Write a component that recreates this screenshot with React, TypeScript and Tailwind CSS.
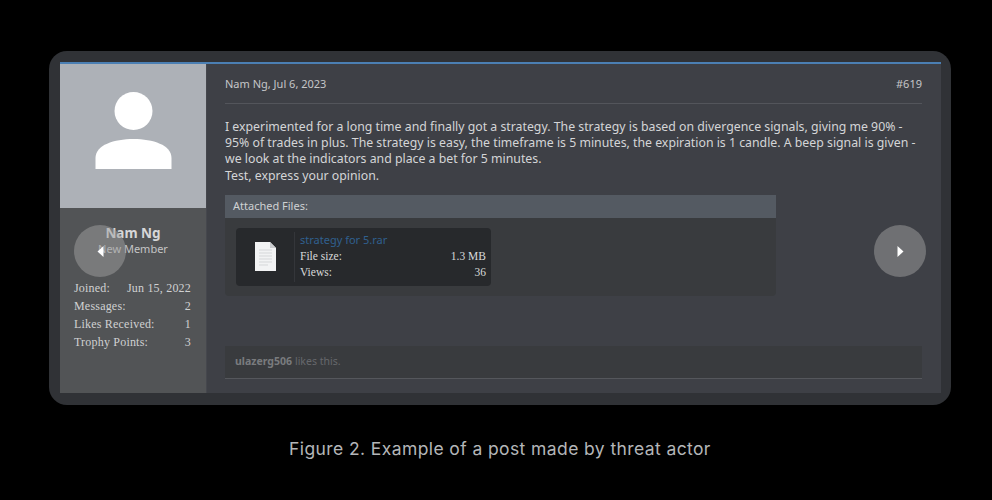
import { ReactNode } from 'react';

function Arrow({ left }: { left?: boolean }) {
    return (
        <svg width="7" height="11" viewBox="0 0 7 11" fill="#ffffff" className={left ? 'rotate-180' : ''}>
            <path d="M0.5 0 L6.5 5.5 L0.5 11 Z" />
        </svg>
    );
}

function Stat({ label, children }: { label: string; children: ReactNode }) {
    return (
        <div className="flex h-[18px] items-center justify-between">
            <span>{label}</span>
            <span>{children}</span>
        </div>
    );
}

export default function App() {
    return (
        <div className="relative h-[500px] w-[992px] overflow-hidden bg-black font-['Noto_Sans',sans-serif]">
            <div className="ml-[49px] flex w-[902px] flex-col items-center pt-[51px]">
                <div className="h-[354px] w-[902px] rounded-[18px] bg-[#303236] pb-[12px] pl-[11px] pr-[10px] pt-[11px]">
                    <div className="flex h-[331px] border-t-2 border-[#4b7fb3] bg-[#3e4046]">
                        <aside className="flex w-[146px] flex-col bg-[#525456]">
                            <div className="flex h-[144px] items-center justify-center bg-[#adb1b7] pb-[12px]">
                                <svg width="77" height="77" viewBox="0 0 77 77" fill="#ffffff">
                                    <circle cx="38.5" cy="19" r="19" />
                                    <path d="M0.5 77 V66 C0.5 53 19 47 38.5 47 C58 47 76.5 53 76.5 66 V77 Z" />
                                </svg>
                            </div>
                            <div className="pt-[16px] text-center">
                                <div className="text-[13.5px] font-bold leading-[18px] text-[#d6d7d8]">Nam Ng</div>
                                <div className="text-[11px] leading-[13px] text-[#c4c5c6]">New Member</div>
                            </div>
                            <div className="mt-[24px] pl-[14px] pr-[15px] font-['Liberation_Serif',serif] text-[12px] tracking-[0.2px] text-[#d0d1d2]">
                                <Stat label="Joined:">Jun 15, 2022</Stat>
                                <Stat label="Messages:">2</Stat>
                                <Stat label="Likes Received:">1</Stat>
                                <Stat label="Trophy Points:">3</Stat>
                            </div>
                        </aside>
                        <main className="flex flex-1 flex-col border-l border-[#45474d] pl-[18px] pr-[19px]">
                            <div className="flex h-[40px] items-center justify-between border-b border-[#53555b] pt-[1px] text-[11px] text-[#c5c6c8]">
                                <span>Nam Ng, Jul 6, 2023</span>
                                <span>#619</span>
                            </div>
                            <p className="mt-[15px] text-[12.3px] leading-[16.2px] text-[#d4d5d7]">
                                I experimented for a long time and finally got a strategy. The strategy is based on divergence signals, giving me 90% -
                                <br />
                                95% of trades in plus. The strategy is easy, the timeframe is 5 minutes, the expiration is 1 candle. A beep signal is given -
                                <br />
                                we look at the indicators and place a bet for 5 minutes.
                                <br />
                                Test, express your opinion.
                            </p>
                            <div className="mt-[11px] w-[551px] rounded-b-[4px] bg-[#393b3e]">
                                <div className="flex h-[23px] items-center bg-[#545a62] px-[8px] text-[11px] text-[#cfd1d3]">Attached Files:</div>
                                <div className="px-[11px] pb-[10px] pt-[10px]">
                                    <div className="flex h-[58px] w-[255px] rounded-[4px] bg-[#27292c] py-[4px]">
                                        <div className="flex w-[59px] items-center justify-center border-r border-[#34363a]">
                                            <svg width="21" height="29" viewBox="0 0 21 29">
                                                <path d="M0 0 H15 L21 6 V29 H0 Z" fill="#f2f3f4" />
                                                <path d="M15 0 L21 6 H15 Z" fill="#c9cbce" />
                                                <path d="M4 8 H17 M4 11 H17 M4 14 H17 M4 17 H17 M4 20 H17 M4 23 H13" stroke="#d5d7d9" strokeWidth="1" />
                                            </svg>
                                        </div>
                                        <div className="flex flex-1 flex-col pl-[5px] pr-[5px] font-['Liberation_Serif',serif] text-[11.5px] leading-[16px] text-[#d8d9da]">
                                            <span className="font-['Noto_Sans',sans-serif] text-[11px] leading-[16px] text-[#30608f]">strategy for 5.rar</span>
                                            <div className="flex justify-between">
                                                <span>File size:</span>
                                                <span>1.3 MB</span>
                                            </div>
                                            <div className="flex justify-between">
                                                <span>Views:</span>
                                                <span>36</span>
                                            </div>
                                        </div>
                                    </div>
                                </div>
                            </div>
                            <div className="mt-[50px] flex h-[33px] items-center border-b border-[#55575c] bg-[#393b3e] px-[10px] text-[10.5px] text-[#66686c]">
                                <span className="font-bold text-[#797b7e]">ulazerg506</span>
                                <span className="ml-[3px]">likes this.</span>
                            </div>
                        </main>
                    </div>
                </div>
                <div className="mt-[33px] font-['Inter',sans-serif] text-[17.5px] leading-[22px] tracking-[0.4px] text-[#b4b6b8]">Figure 2. Example of a post made by threat actor</div>
            </div>
            <button className="absolute left-[74px] top-[225px] flex h-[52px] w-[52px] items-center justify-center rounded-full bg-[#a0a0a0]/50">
                <Arrow left />
            </button>
            <button className="absolute left-[874px] top-[225px] flex h-[52px] w-[52px] items-center justify-center rounded-full bg-[#a0a0a0]/50">
                <Arrow />
            </button>
        </div>
    );
}
